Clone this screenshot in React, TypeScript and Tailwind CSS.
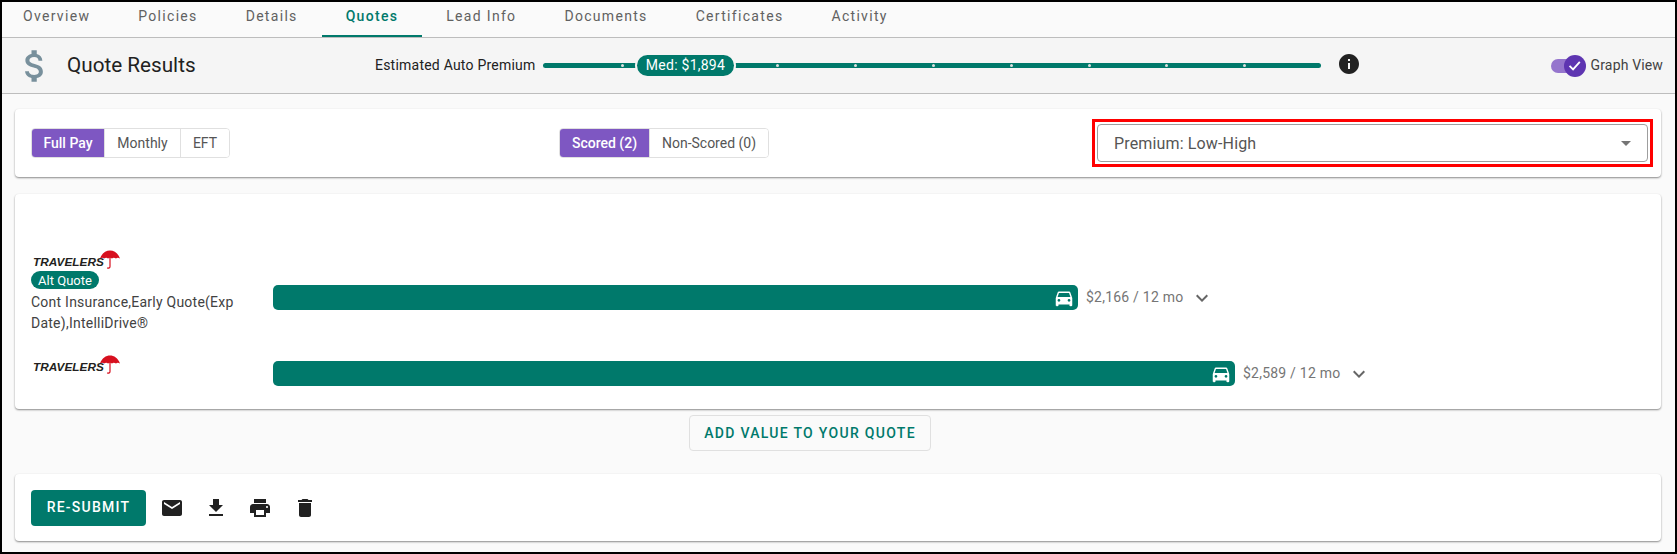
const font = { fontFamily: "Roboto, 'Liberation Sans', sans-serif" };

const Icon = ({ d, className }: { d: string; className: string }) => (
  <svg viewBox="0 0 24 24" fill="currentColor" className={className}>
    <path d={d} />
  </svg>
);

const paths = {
  dollar:
    "M11.8 10.9c-2.27-.59-3-1.2-3-2.15 0-1.09 1.01-1.85 2.7-1.85 1.78 0 2.44.85 2.5 2.1h2.21c-.07-1.72-1.12-3.3-3.21-3.81V3h-3v2.16c-1.94.42-3.5 1.68-3.5 3.61 0 2.31 1.91 3.46 4.7 4.13 2.5.6 3 1.48 3 2.41 0 .69-.49 1.79-2.7 1.79-2.06 0-2.87-.92-2.98-2.1h-2.2c.12 2.19 1.76 3.42 3.68 3.83V21h3v-2.15c1.95-.37 3.5-1.5 3.5-3.55 0-2.84-2.43-3.81-4.7-4.4z",
  info: "M12 2C6.48 2 2 6.48 2 12s4.48 10 10 10 10-4.48 10-10S17.52 2 12 2zm1 15h-2v-6h2v6zm0-8h-2V7h2v2z",
  car: "M18.92 6.01C18.72 5.42 18.16 5 17.5 5h-11c-.66 0-1.21.42-1.42 1.01L3 12v8c0 .55.45 1 1 1h1c.55 0 1-.45 1-1v-1h12v1c0 .55.45 1 1 1h1c.55 0 1-.45 1-1v-8l-2.08-5.99zM6.5 16c-.83 0-1.5-.67-1.5-1.5S5.67 13 6.5 13s1.5.67 1.5 1.5S7.33 16 6.5 16zm11 0c-.83 0-1.5-.67-1.5-1.5s.67-1.5 1.5-1.5 1.5.67 1.5 1.5-.67 1.5-1.5 1.5zM5 11l1.5-4.5h11L19 11H5z",
  chevron: "M16.59 8.59 12 13.17 7.41 8.59 6 10l6 6 6-6z",
  mail: "M20 4H4c-1.1 0-1.99.9-1.99 2L2 18c0 1.1.9 2 2 2h16c1.1 0 2-.9 2-2V6c0-1.1-.9-2-2-2zm0 4l-8 5-8-5V6l8 5 8-5v2z",
  download: "M19 9h-4V3H9v6H5l7 7 7-7zM5 18v2h14v-2H5z",
  print:
    "M19 8H5c-1.66 0-3 1.34-3 3v6h4v4h12v-4h4v-6c0-1.66-1.34-3-3-3zm-3 11H8v-5h8v5zm3-7c-.55 0-1-.45-1-1s.45-1 1-1 1 .45 1 1-.45 1-1 1zm-1-9H6v4h12V3z",
  trash: "M6 19c0 1.1.9 2 2 2h8c1.1 0 2-.9 2-2V7H6v12zM19 4h-3.5l-1-1h-5l-1 1H5v2h14V4z",
};

const tabs = ["Overview", "Policies", "Details", "Quotes", "Lead Info", "Documents", "Certificates", "Activity"];
const ticks = [1, 2, 3, 4, 5, 6, 7, 8, 9];

const Travelers = () => (
  <div className="flex items-end h-[19px]">
    <span className="text-[11.8px] leading-[13px] font-bold italic tracking-[0.05px] text-[#231f20] font-['Liberation_Sans']">
      TRAVELERS
    </span>
    <svg viewBox="0 0 20 19" className="w-[20px] h-[19px] -ml-[4px]">
      <path d="M0 8.500C2 3 6 .5 10 .5s8 2.500 10 8c-1.500-1-3-1-4 0-1.500-1-3-1-4 0-1.500-1-2.500-1-4 0-1-1-2.500-1-4 0-1-1-2.500-1-4 0z" fill="#d7101f" />
      <path d="M10 7v9.500c0 1.500-1 1.700-3 1.500" fill="none" stroke="#d7101f" strokeWidth="1.2" />
    </svg>
  </div>
);

const Segmented = ({ items }: { items: { label: string; w: string; on?: boolean }[] }) => (
  <div className="flex h-[30px] rounded border border-[#e0e0e0] overflow-hidden text-[14px]">
    {items.map((item, i) => (
      <div
        key={item.label}
        className={`${item.w} flex items-center justify-center ${i > 0 ? "border-l border-[#e0e0e0]" : ""} ${item.on ? "bg-[#7e57c2] text-white font-medium" : "bg-white text-[#555555]"}`}
      >
        {item.label}
      </div>
    ))}
  </div>
);

const QuoteBar = ({ width, price }: { width: string; price: string }) => (
  <div className="flex items-center">
    <div className={`${width} h-[25px] rounded-[5px] bg-[#00796b] flex items-center justify-end pr-[3px]`}>
      <Icon d={paths.car} className="w-[22px] h-[22px] text-white" />
    </div>
    <span className="ml-[8px] text-[14px] tracking-[0.22px] text-[#757575]">{price}</span>
    <Icon d={paths.chevron} className="ml-[7px] w-[24px] h-[24px] text-[#666666]" />
  </div>
);

export default function App() {
  return (
    <div style={font} className="w-[1677px] h-[554px] border-2 border-black bg-[#fafafa] overflow-hidden flex flex-col">
      {/* Tabs */}
      <div className="h-[36px] flex shrink-0 border-b border-[#bdbdbd]">
        {tabs.map((tab, i) => (
          <div
            key={tab}
            className={`h-[35px] px-[24px] pb-[4px] flex items-center text-[14px] tracking-[1.31px] border-b-2 ${i === 0 ? "-ml-[3px]" : ""} ${tab === "Quotes" ? "border-[#00796b] text-[#00796b] font-medium" : "border-transparent text-[#616161]"}`}
          >
            {tab}
          </div>
        ))}
      </div>

      {/* Header */}
      <div className="h-[56px] shrink-0 bg-[#f5f5f5] border-b border-[#bdbdbd] flex items-center relative">
        <Icon d={paths.dollar} className="ml-[12px] w-[42px] h-[42px] text-[#78909c]" />
        <span className="ml-[11px] text-[20.7px] text-[#212121] w-[180px]">Quote Results</span>
        <span className="ml-[128px] text-[14px] tracking-[0.22px] text-[#212121] w-[168px]">Estimated Auto Premium</span>
        <div className="relative w-[778px] h-[5px] rounded-full bg-[#00796b]">
          {ticks.map((t) => (
            <span
              key={t}
              className="absolute top-[1px] w-[3px] h-[3px] ml-0 rounded-full bg-[#e0e0e0]"
              style={{ left: `${t * 10}%` }}
            />
          ))}
          <div className="absolute left-[94px] -top-[8px] h-[21px] w-[97px] rounded-full bg-[#00796b] ring-2 ring-[#f5f5f5] text-white text-[14px] tracking-[0.25px] flex items-center justify-center">
            Med: $1,894
          </div>
        </div>
        <Icon d={paths.info} className="ml-[16px] -mt-[3px] w-[24px] h-[24px] text-[#212121]" />
        <div className="ml-auto mr-[12px] flex items-center">
          <div className="relative w-[34px] h-[14px] rounded-full bg-[#9575cd]">
            <div className="absolute -right-px -top-[4px] w-[22px] h-[22px] rounded-full bg-[#5e35b1] flex items-center justify-center">
              <svg viewBox="0 0 24 24" className="w-[17px] h-[17px]" fill="none" stroke="white" strokeWidth="2.6">
                <path d="M5 12.5l5 5L19.5 7" />
              </svg>
            </div>
          </div>
          <span className="ml-[6px] -mt-px text-[14px] tracking-[0.15px] text-[#424242]">Graph View</span>
        </div>
      </div>

      {/* Filters */}
      <div className="ml-[13px] mr-[14px] mt-[15px] h-[68px] shrink-0 bg-white rounded shadow-[0_1px_2px_rgba(0,0,0,0.45)] flex items-center relative pl-[16px]">
        <Segmented
          items={[
            { label: "Full Pay", w: "w-[72px]", on: true },
            { label: "Monthly", w: "w-[76px]" },
            { label: "EFT", w: "w-[49px]" },
          ]}
        />
        <div className="ml-[329px]">
          <Segmented
            items={[
              { label: "Scored (2)", w: "w-[89px]", on: true },
              { label: "Non-Scored (0)", w: "w-[119px]" },
            ]}
          />
        </div>
        <div className="ml-[323px] w-[561px] h-[48px] border-[3px] border-[#ff0000] p-[2px]">
          <div className="h-full rounded border border-[#9e9e9e] flex items-center justify-between pl-[16px] pr-[16px] pt-px text-[16px] tracking-[0.15px] text-[#555555]">
            Premium: Low-High
            <span className="w-0 h-0 border-x-[5px] border-x-transparent border-t-[5px] border-t-[#757575]" />
          </div>
        </div>
      </div>

      {/* Results */}
      <div className="ml-[13px] mr-[14px] mt-[17px] h-[215px] shrink-0 bg-white rounded shadow-[0_1px_2px_rgba(0,0,0,0.45)] pl-[16px]">
        <div className="mt-[56px] flex items-start">
          <div className="w-[242px] text-[14px] leading-[21px] tracking-[0.24px] text-[#424242]">
            <div className="ml-[2px]"><Travelers /></div>
            <div className="mt-[2px] h-[18px] w-[68px] rounded-full bg-[#00796b] text-white text-[13px] tracking-normal flex items-center justify-center">
              Alt Quote
            </div>
            <div className="mt-[3px] w-[210px]">Cont Insurance,Early Quote(Exp Date),IntelliDrive®</div>
          </div>
          <div className="mt-[35px]">
            <QuoteBar width="w-[805px]" price="$2,166 / 12 mo" />
          </div>
        </div>
        <div className="mt-[21px] flex items-start">
          <div className="w-[242px] pl-[2px]"><Travelers /></div>
          <div className="mt-[6px]">
            <QuoteBar width="w-[962px]" price="$2,589 / 12 mo" />
          </div>
        </div>
      </div>

      {/* Add value */}
      <div className="mt-[6px] ml-[687px] shrink-0">
        <div className="w-[242px] h-[36px] rounded border border-[#e0e0e0] text-[#00796b] text-[14px] font-medium tracking-[1.3px] flex items-center justify-center">
          ADD VALUE TO YOUR QUOTE
        </div>
      </div>

      {/* Actions */}
      <div className="ml-[13px] mr-[14px] mt-[23px] h-[67px] shrink-0 bg-white rounded shadow-[0_1px_2px_rgba(0,0,0,0.45)] flex items-center pl-[16px]">
        <div className="w-[115px] h-[36px] rounded bg-[#00796b] text-white text-[14px] font-medium tracking-[1.25px] flex items-center justify-center">
          RE-SUBMIT
        </div>
        <Icon d={paths.mail} className="ml-[14px] w-[24px] h-[24px] text-[#212121]" />
        <Icon d={paths.download} className="ml-[20px] w-[24px] h-[24px] text-[#212121]" />
        <Icon d={paths.print} className="ml-[20px] w-[24px] h-[24px] text-[#212121]" />
        <Icon d={paths.trash} className="ml-[21px] w-[24px] h-[24px] text-[#212121]" />
      </div>
    </div>
  );
}
